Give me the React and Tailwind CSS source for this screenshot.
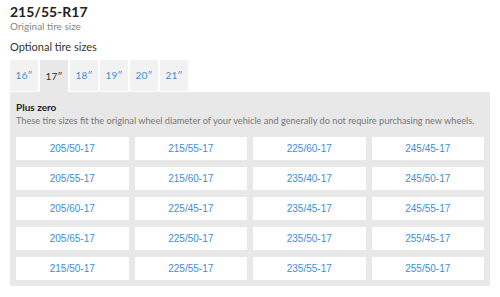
export default function App() {
  const sizes = [
    "205/50-17", "215/55-17", "225/60-17", "245/45-17",
    "205/55-17", "215/60-17", "235/40-17", "245/50-17",
    "205/60-17", "225/45-17", "235/45-17", "245/55-17",
    "205/65-17", "225/50-17", "235/50-17", "255/45-17",
    "215/50-17", "225/55-17", "235/55-17", "255/50-17",
  ];
  const tabs = ["16\u2033", "17\u2033", "18\u2033", "19\u2033", "20\u2033", "21\u2033"];
  return (
    <div className="w-[500px] h-[297px] bg-white px-[10px] pt-[4px] overflow-hidden" style={{ fontFamily: "Lato, 'Noto Sans', sans-serif" }}>
      <div className="text-[14px] font-bold leading-[16px] text-[#222]">215/55-R17</div>
      <div className="text-[10px] leading-[12px] text-[#888]">Original tire size</div>
      <div className="mt-[8px] text-[11px] leading-[14px] text-[#333]">Optional tire sizes</div>
      <div className="mt-[6px] flex gap-[2px]">
        {tabs.map((t, i) => (
          <div
            key={t}
            className={
              i === 1
                ? "w-[28px] h-[32px] bg-[#e8e8e8] flex items-center justify-center text-[10px] text-[#333]"
                : "w-[28px] h-[31px] mb-[1px] bg-[#f2f2f2] flex items-center justify-center text-[10px] text-[#3a8fd9]"
            }
          >
            {t}
          </div>
        ))}
      </div>
      <div className="w-[480px] bg-[#e8e8e8] px-[6px] pt-[9px] pb-[6px]">
        <div className="text-[10px] font-bold leading-[13px] text-[#222]">Plus zero</div>
        <div className="text-[9.2px] leading-[13px] text-[#777] whitespace-nowrap">
          These tire sizes fit the original wheel diameter of your vehicle and generally do not require purchasing new wheels.
        </div>
        <div className="mt-[10px] grid grid-cols-4 gap-x-[6px] gap-y-[7px]">
          {sizes.map((s) => (
            <div
              key={s}
              className="h-[23px] bg-white flex items-center justify-center text-[10px] text-[#3a8fd9]"
              style={{ fontFamily: "'Liberation Sans', Arial, sans-serif" }}
            >
              {s}
            </div>
          ))}
        </div>
      </div>
    </div>
  );
}
